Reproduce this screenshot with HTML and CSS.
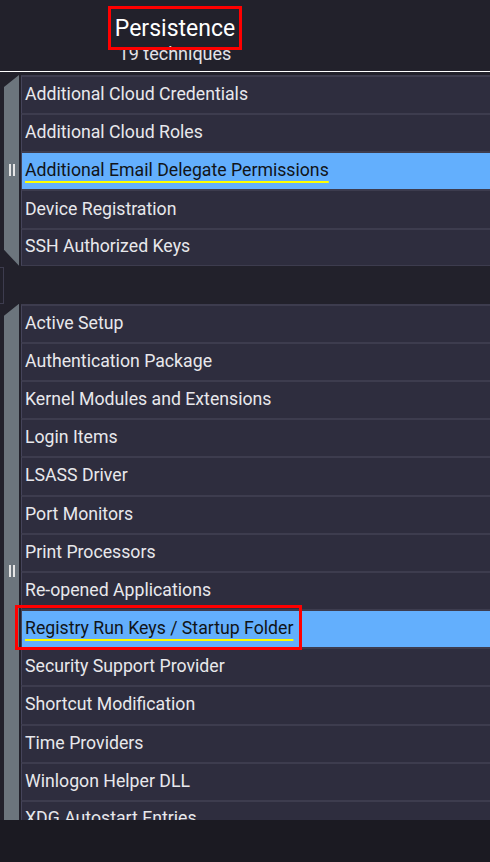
FILE: index.html
```html
<!DOCTYPE html>
<html>
<head>
<meta charset="utf-8">
<link rel="stylesheet" href="styles.css">
</head>
<body>
<div class="page">
  <header class="header">
    <div class="title"><span class="mark mark-title">Persistence</span></div>
    <div class="count">19 techniques</div>
  </header>
  <main class="matrix">
    <section class="group">
      <div class="strip"><span class="grip"></span></div>
      <ul class="rows">
        <li class="row">Additional Cloud Credentials</li>
        <li class="row">Additional Cloud Roles</li>
        <li class="row active"><span class="label">Additional Email Delegate Permissions</span></li>
        <li class="row">Device Registration</li>
        <li class="row">SSH Authorized Keys</li>
      </ul>
    </section>
    <div class="spacer"><span class="stub"></span></div>
    <section class="group">
      <div class="strip"><span class="grip"></span></div>
      <ul class="rows">
        <li class="row">Active Setup</li>
        <li class="row">Authentication Package</li>
        <li class="row">Kernel Modules and Extensions</li>
        <li class="row">Login Items</li>
        <li class="row">LSASS Driver</li>
        <li class="row">Port Monitors</li>
        <li class="row">Print Processors</li>
        <li class="row">Re-opened Applications</li>
        <li class="row active"><span class="label mark mark-row">Registry Run Keys / Startup Folder</span></li>
        <li class="row">Security Support Provider</li>
        <li class="row">Shortcut Modification</li>
        <li class="row">Time Providers</li>
        <li class="row">Winlogon Helper DLL</li>
        <li class="row">XDG Autostart Entries</li>
      </ul>
    </section>
  </main>
  <footer class="footer"></footer>
</div>
</body>
</html>
```
FILE: styles.css
```css
* { box-sizing: border-box; }
html, body { margin: 0; padding: 0; }
body {
  background: #22212b;
  font-family: Roboto, "Noto Sans", sans-serif;
  color: #e8e8ec;
}
.page {
  height: 862px;
  display: flex;
  flex-direction: column;
  overflow: hidden;
}
.header {
  width: 100%;
  height: 72px;
  flex: none;
  padding-top: 14px;
  border-bottom: 1px solid #ffffff;
  overflow: hidden;
}
.header .title, .header .count {
  width: 350px;
  text-align: center;
}
.title {
  position: relative;
  z-index: 2;
  font-size: 23px;
  line-height: 30px;
  color: #ffffff;
}
.count {
  font-size: 18px;
  line-height: 20px;
  color: #e4e4e8;
  margin-top: 0;
}
.mark { position: relative; }
.mark::after {
  content: "";
  position: absolute;
  border: 3px solid #ff0000;
  pointer-events: none;
}
.mark-title::after { left: -7px; right: -7px; top: -9px; bottom: -8px; }
.mark-row::after { left: -10px; right: -9px; top: -13px; bottom: -12px; }

.matrix {
  flex: 1;
  overflow: hidden;
  padding-top: 3px;
}
.group {
  display: flex;
  padding-left: 4px;
}
.strip {
  width: 15px;
  margin-right: 2px;
  background: #6c757d;
  clip-path: polygon(0 12px, 100% 0, 100% 100%, 0 calc(100% - 16px));
  display: flex;
  align-items: center;
  justify-content: center;
}
.grip {
  width: 6px;
  height: 12px;
  border-left: 2px solid #e6e6e6;
  border-right: 2px solid #e6e6e6;
}
.rows {
  list-style: none;
  margin: 0;
  padding: 0;
  flex: 1;
}
.row {
  height: 38.17px;
  border-top: 2px solid #3d3c4e;
  border-left: 1px solid #45445a;
  background: #2e2d3e;
  padding-left: 3px;
  padding-bottom: 2px;
  display: flex;
  align-items: center;
  font-size: 17.7px;
  white-space: nowrap;
}
.row:last-child { border-bottom: 1px solid #3d3c4e; }
.row.active {
  background: #63affd;
  color: #111418;
}
.label {
  text-decoration: underline;
  text-decoration-color: #ffff00;
  text-decoration-thickness: 2px;
  text-underline-offset: 5px;
}
.spacer {
  height: 38px;
  position: relative;
}
.stub {
  position: absolute;
  left: -2px;
  top: 1px;
  width: 6px;
  height: 37px;
  border: 1px solid #3d3c4e;
}
.footer {
  height: 42px;
  flex: none;
  background: #1b1a22;
}
```
